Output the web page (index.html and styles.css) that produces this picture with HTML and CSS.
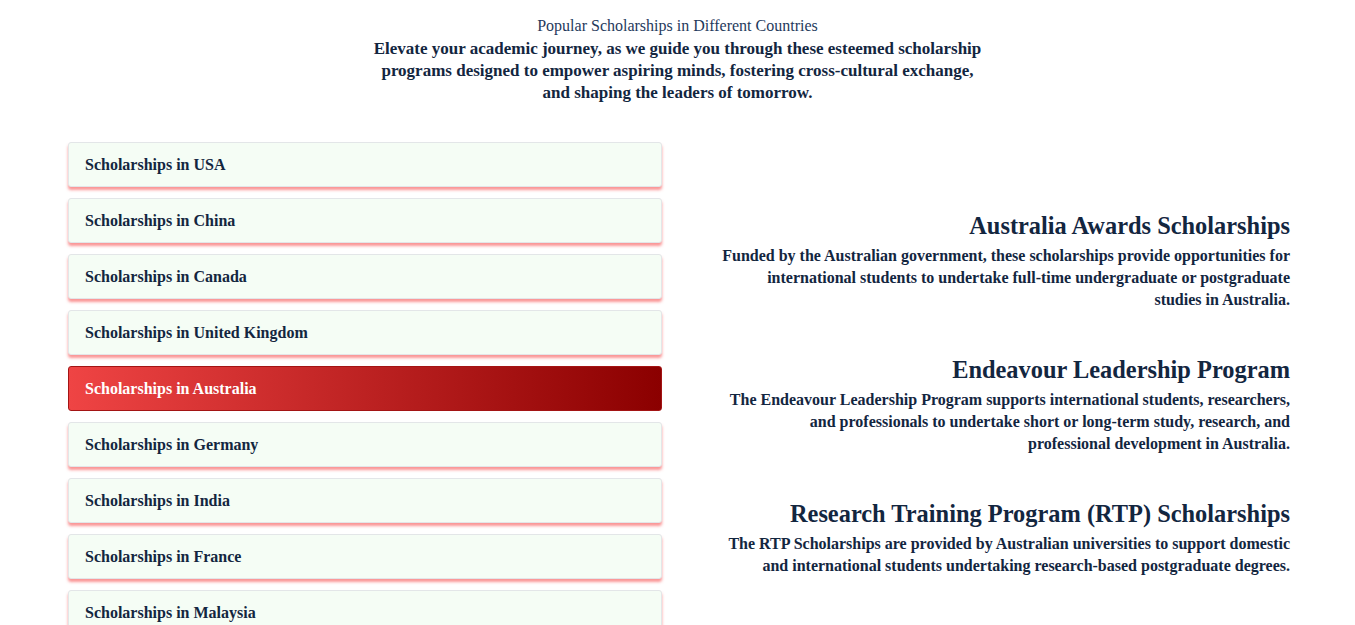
FILE: index.html
```html
<!DOCTYPE html>
<html lang="en">
<head>
<meta charset="utf-8">
<title>Popular Scholarships</title>
<link rel="stylesheet" href="styles.css">
</head>
<body>
<header class="intro">
  <p class="eyebrow">Popular Scholarships in Different Countries</p>
  <p class="lead">Elevate your academic journey, as we guide you through these esteemed scholarship programs designed to empower aspiring minds, fostering cross-cultural exchange, and shaping the leaders of tomorrow.</p>
</header>
<main class="main">
  <ul class="countries">
    <li class="country">Scholarships in USA</li>
    <li class="country">Scholarships in China</li>
    <li class="country">Scholarships in Canada</li>
    <li class="country">Scholarships in United Kingdom</li>
    <li class="country active">Scholarships in Australia</li>
    <li class="country">Scholarships in Germany</li>
    <li class="country">Scholarships in India</li>
    <li class="country">Scholarships in France</li>
    <li class="country">Scholarships in Malaysia</li>
  </ul>
  <section class="details">
    <article class="detail">
      <h2>Australia Awards Scholarships</h2>
      <p>Funded by the Australian government, these scholarships provide opportunities for international students to undertake full-time undergraduate or postgraduate studies in Australia.</p>
    </article>
    <article class="detail detail-narrow">
      <h2>Endeavour Leadership Program</h2>
      <p>The Endeavour Leadership Program supports international students, researchers, and professionals to undertake short or long-term study, research, and professional development in Australia.</p>
    </article>
    <article class="detail">
      <h2>Research Training Program (RTP) Scholarships</h2>
      <p>The RTP Scholarships are provided by Australian universities to support domestic and international students undertaking research-based postgraduate degrees.</p>
    </article>
  </section>
</main>
</body>
</html>
```
FILE: styles.css
```css
* { box-sizing: border-box; }
body {
  margin: 0;
  font-family: "Liberation Serif", "DejaVu Serif", serif;
  color: #13263f;
  background: #fff;
}
.intro {
  text-align: center;
  padding-top: 16px;
}
.eyebrow {
  margin: 0;
  font-size: 16px;
  line-height: 20px;
  color: #1f3a5c;
}
.lead {
  margin: 2px auto 0;
  max-width: 620px;
  font-size: 17px;
  font-weight: 600;
  line-height: 22px;
}
.main {
  display: grid;
  grid-template-columns: 594px 595px;
  column-gap: 33px;
  padding: 0 66px 0 68px;
  margin-top: 38px;
}
.countries {
  list-style: none;
  margin: 0;
  padding: 0;
  display: flex;
  flex-direction: column;
  gap: 11px;
}
.country {
  height: 45px;
  display: flex;
  align-items: center;
  padding-left: 16px;
  background: #f5fdf5;
  border: 1px solid #e3e6e8;
  border-radius: 3px;
  box-shadow: 0 3px 3px rgba(248, 113, 113, 0.75);
  font-size: 16px;
  font-weight: 700;
  color: #13263f;
}
.country.active {
  background: linear-gradient(90deg, #ef4444, #8b0000);
  border-color: #a31414;
  color: #fff;
  box-shadow: none;
}
.details {
  text-align: right;
  padding-top: 69px;
  display: flex;
  flex-direction: column;
  gap: 44px;
}
.detail h2 {
  margin: 0 0 4px;
  font-size: 24.4px;
  font-weight: 700;
  line-height: 30px;
  color: #13263f;
}
.detail p {
  margin: 0 0 0 auto;
  max-width: 571px;
  font-size: 16px;
  font-weight: 600;
  line-height: 22px;
  color: #13263f;
}
.detail-narrow p {
  max-width: 563px;
}
```
